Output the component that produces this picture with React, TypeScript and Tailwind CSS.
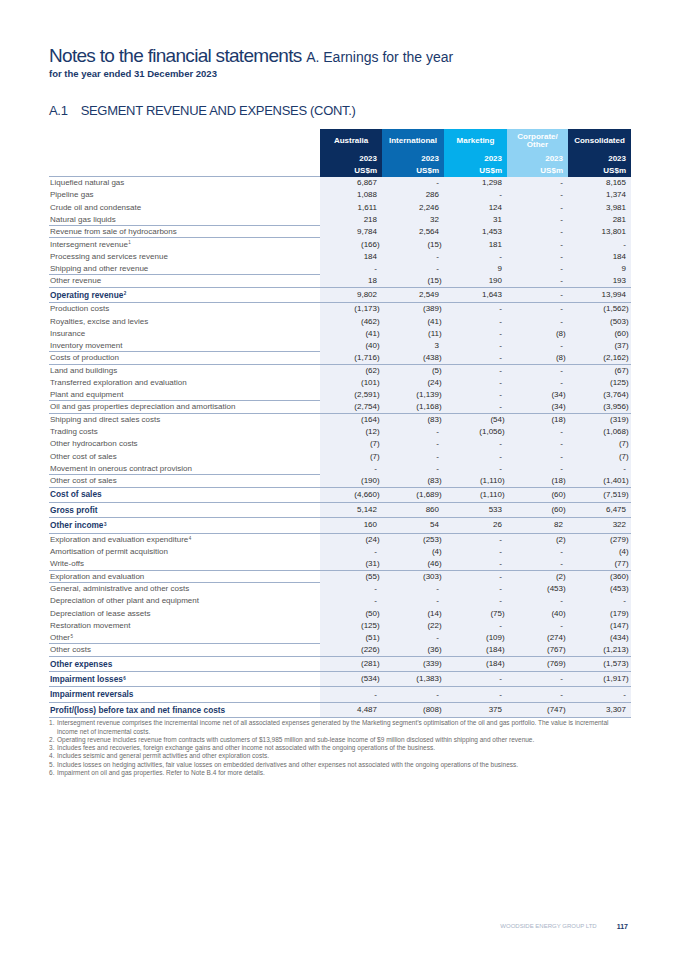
import React from "react";

type Row = {
  label: string;
  sup?: string;
  values: string[];
  bold?: boolean;
  line?: boolean;
};

const rows: Row[] = [
  { label: "Liquefied natural gas", values: ["6,867", "-", "1,298", "-", "8,165"] },
  { label: "Pipeline gas", values: ["1,088", "286", "-", "-", "1,374"] },
  { label: "Crude oil and condensate", values: ["1,611", "2,246", "124", "-", "3,981"] },
  { label: "Natural gas liquids", values: ["218", "32", "31", "-", "281"], line: true },
  { label: "Revenue from sale of hydrocarbons", values: ["9,784", "2,564", "1,453", "-", "13,801"], line: true },
  { label: "Intersegment revenue", sup: "1", values: ["(166)", "(15)", "181", "-", "-"] },
  { label: "Processing and services revenue", values: ["184", "-", "-", "-", "184"] },
  { label: "Shipping and other revenue", values: ["-", "-", "9", "-", "9"], line: true },
  { label: "Other revenue", values: ["18", "(15)", "190", "-", "193"], line: true },
  { label: "Operating revenue", sup: "2", values: ["9,802", "2,549", "1,643", "-", "13,994"], bold: true, line: true },
  { label: "Production costs", values: ["(1,173)", "(389)", "-", "-", "(1,562)"] },
  { label: "Royalties, excise and levies", values: ["(462)", "(41)", "-", "-", "(503)"] },
  { label: "Insurance", values: ["(41)", "(11)", "-", "(8)", "(60)"] },
  { label: "Inventory movement", values: ["(40)", "3", "-", "-", "(37)"], line: true },
  { label: "Costs of production", values: ["(1,716)", "(438)", "-", "(8)", "(2,162)"], line: true },
  { label: "Land and buildings", values: ["(62)", "(5)", "-", "-", "(67)"] },
  { label: "Transferred exploration and evaluation", values: ["(101)", "(24)", "-", "-", "(125)"] },
  { label: "Plant and equipment", values: ["(2,591)", "(1,139)", "-", "(34)", "(3,764)"], line: true },
  { label: "Oil and gas properties depreciation and amortisation", values: ["(2,754)", "(1,168)", "-", "(34)", "(3,956)"], line: true },
  { label: "Shipping and direct sales costs", values: ["(164)", "(83)", "(54)", "(18)", "(319)"] },
  { label: "Trading costs", values: ["(12)", "-", "(1,056)", "-", "(1,068)"] },
  { label: "Other hydrocarbon costs", values: ["(7)", "-", "-", "-", "(7)"] },
  { label: "Other cost of sales", values: ["(7)", "-", "-", "-", "(7)"] },
  { label: "Movement in onerous contract provision", values: ["-", "-", "-", "-", "-"], line: true },
  { label: "Other cost of sales", values: ["(190)", "(83)", "(1,110)", "(18)", "(1,401)"], line: true },
  { label: "Cost of sales", values: ["(4,660)", "(1,689)", "(1,110)", "(60)", "(7,519)"], bold: true, line: true },
  { label: "Gross profit", values: ["5,142", "860", "533", "(60)", "6,475"], bold: true, line: true },
  { label: "Other income", sup: "3", values: ["160", "54", "26", "82", "322"], bold: true, line: true },
  { label: "Exploration and evaluation expenditure", sup: "4", values: ["(24)", "(253)", "-", "(2)", "(279)"] },
  { label: "Amortisation of permit acquisition", values: ["-", "(4)", "-", "-", "(4)"] },
  { label: "Write-offs", values: ["(31)", "(46)", "-", "-", "(77)"], line: true },
  { label: "Exploration and evaluation", values: ["(55)", "(303)", "-", "(2)", "(360)"], line: true },
  { label: "General, administrative and other costs", values: ["-", "-", "-", "(453)", "(453)"] },
  { label: "Depreciation of other plant and equipment", values: ["-", "-", "-", "-", "-"] },
  { label: "Depreciation of lease assets", values: ["(50)", "(14)", "(75)", "(40)", "(179)"] },
  { label: "Restoration movement", values: ["(125)", "(22)", "-", "-", "(147)"] },
  { label: "Other", sup: "5", values: ["(51)", "-", "(109)", "(274)", "(434)"], line: true },
  { label: "Other costs", values: ["(226)", "(36)", "(184)", "(767)", "(1,213)"], line: true },
  { label: "Other expenses", values: ["(281)", "(339)", "(184)", "(769)", "(1,573)"], bold: true, line: true },
  { label: "Impairment losses", sup: "6", values: ["(534)", "(1,383)", "-", "-", "(1,917)"], bold: true, line: true },
  { label: "Impairment reversals", values: ["-", "-", "-", "-", "-"], bold: true, line: true },
  { label: "Profit/(loss) before tax and net finance costs", values: ["4,487", "(808)", "375", "(747)", "3,307"], bold: true, line: true },
];

const segments = [
  { name: "Australia", bg: "bg-[#0b2d5f]" },
  { name: "International", bg: "bg-[#0a6ab2]" },
  { name: "Marketing", bg: "bg-[#05aeeb]" },
  { name: "Corporate/ Other", bg: "bg-[#8fd2f3]" },
  { name: "Consolidated", bg: "bg-[#0b2d5f]" },
];

const notes = [
  "Intersegment revenue comprises the incremental income net of all associated expenses generated by the Marketing segment\u2019s optimisation of the oil and gas portfolio. The value is incremental income net of incremental costs.",
  "Operating revenue includes revenue from contracts with customers of $13,985 million and sub-lease income of $9 million disclosed within shipping and other revenue.",
  "Includes fees and recoveries, foreign exchange gains and other income not associated with the ongoing operations of the business.",
  "Includes seismic and general permit activities and other exploration costs.",
  "Includes losses on hedging activities, fair value losses on embedded derivatives and other expenses not associated with the ongoing operations of the business.",
  "Impairment on oil and gas properties. Refer to Note B.4 for more details.",
];

const grid = "grid grid-cols-[271px_62px_62px_63px_61px_63px]";

// number with the closing bracket hanging past the digits
function Num({ v }: { v: string }) {
  const neg = v.startsWith("(");
  return (
    <div className="flex justify-end items-center pr-[2px]">
      <span>{neg ? v.slice(0, -1) : v}</span>
      <span className="w-[3px]">{neg ? ")" : ""}</span>
    </div>
  );
}

export default function App() {
  return (
    <div
      className="w-[679px] min-h-[960px] bg-white flex flex-col pl-[49px] text-[#3b3b3b]"
      style={{ fontFamily: '"Liberation Sans", Arial, sans-serif' }}
    >
      {/* Page title */}
      <div className="pt-[46px] text-[#1b396b]">
        <h1 className="text-[19px] leading-[20px] tracking-[-0.7px]">
          Notes to the financial statements{" "}
          <span className="text-[14px] tracking-[0px]">A. Earnings for the year</span>
        </h1>
        <div className="text-[9.5px] font-bold leading-[11px] mt-[1px]">
          for the year ended 31 December 2023
        </div>
        <h2 className="mt-[24px] text-[13px] leading-[16px] tracking-[-0.3px] flex gap-[13px]">
          <span>A.1</span>
          <span>SEGMENT REVENUE AND EXPENSES (CONT.)</span>
        </h2>
      </div>

      {/* Table */}
      <div className="mt-[10px] w-[582px]">
        <div className={grid}>
          <div className="border-b border-[#9fb0cb]" />
          {segments.map((s) => (
            <div key={s.name} className={`${s.bg} text-white font-bold text-[8px]`}>
              <div className="h-[24px] flex items-center justify-center text-center leading-[8px] px-[6px]">
                {s.name}
              </div>
              <div className="h-[12px] flex items-center justify-end pr-[5px]">2023</div>
              <div className="h-[12px] flex items-center justify-end pr-[5px]">US$m</div>
            </div>
          ))}
        </div>

        {rows.map((r, i) => (
          <div
            key={i}
            className={`${grid} ${r.bold ? "h-[15.4px]" : "h-[12.3px]"} ${
              r.line ? "border-b border-[#9fb0cb]" : ""
            } text-[8px]`}
          >
            <div
              className={`flex items-center pl-[1px] ${
                r.bold ? "font-bold text-[#1b396b] text-[8.3px]" : "text-[#555]"
              }`}
            >
              <span>
                {r.label}
                {r.sup && <sup className="text-[4.5px] ml-[0.5px]">{r.sup}</sup>}
              </span>
            </div>
            {r.values.map((v, j) => (
              <div key={j} className="bg-[#edf0f8] flex items-center justify-end text-[#2a2a2a]">
                <Num v={v} />
              </div>
            ))}
          </div>
        ))}

        {/* Footnotes */}
        <ol className="mt-[1px] text-[6.5px] leading-[8.3px] text-[#6b6b6b]">
          {notes.map((n, i) => (
            <li key={i} className="flex">
              <span className="w-[8px] shrink-0">{i + 1}.</span>
              <span className="pr-[14px]">{n}</span>
            </li>
          ))}
        </ol>
      </div>

      {/* Footer */}
      <div className="mt-auto pb-[28px] flex justify-end items-center gap-[20px] pr-[51px]">
        <span className="text-[6px] text-[#a9b4c7]">WOODSIDE ENERGY GROUP LTD</span>
        <span className="text-[7px] font-bold text-[#1b396b]">117</span>
      </div>
    </div>
  );
}
